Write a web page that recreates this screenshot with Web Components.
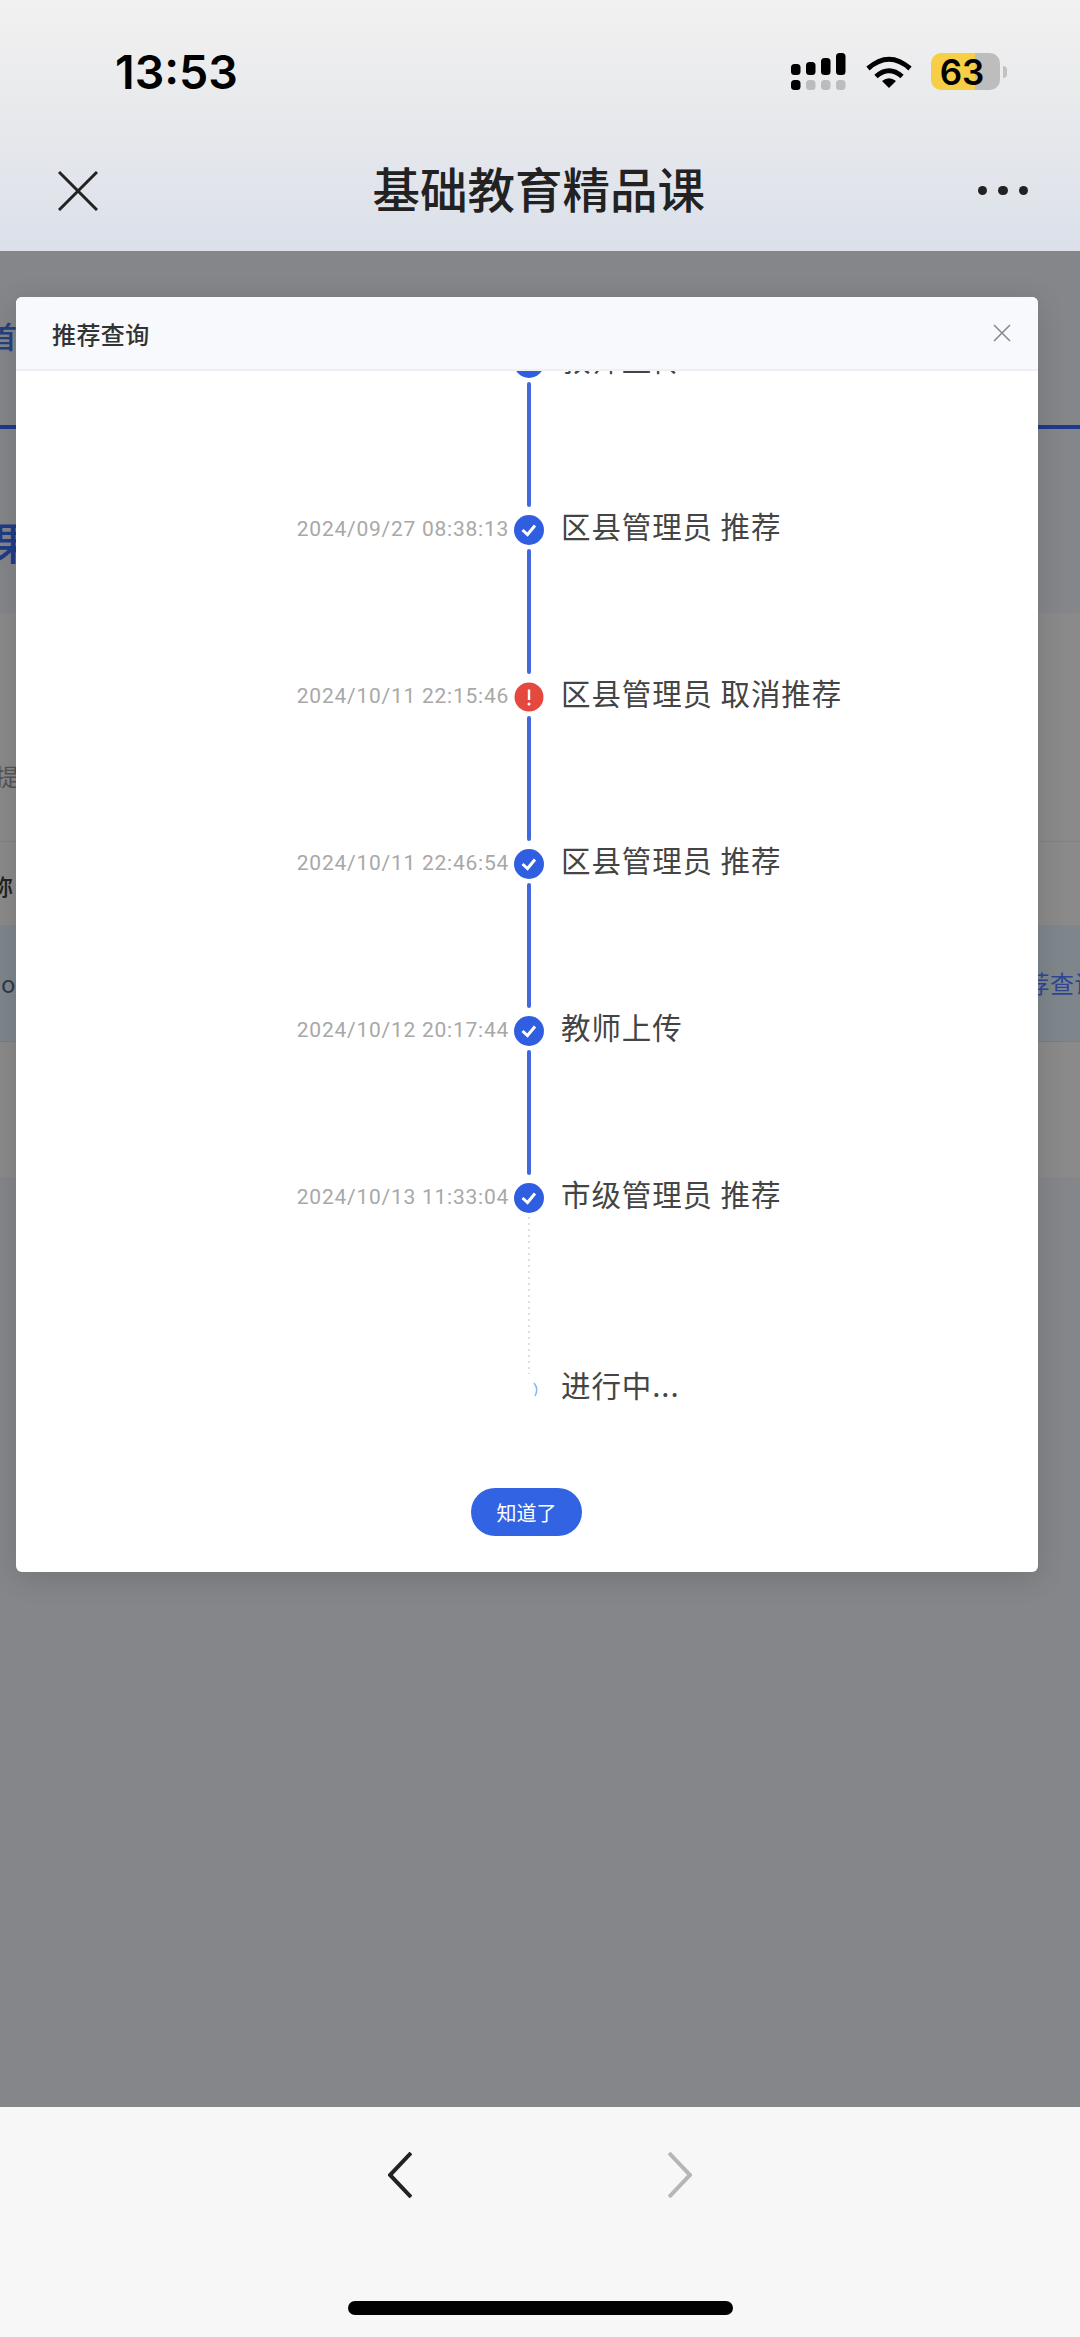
<!DOCTYPE html>
<html lang="zh">
<head>
<meta charset="utf-8">
<title>基础教育精品课</title>
<style>
    html, body {margin: 0; padding: 0; background: #85868a;}
    body {font-family: "Noto Sans CJK SC", "Noto Sans", sans-serif;}
</style>
</head>
<body>
<x-app>
    <x-status-bar slot="top" time="13:53" battery="63"></x-status-bar>
    <x-nav-bar slot="top">基础教育精品课</x-nav-bar>
    <x-backdrop slot="main"></x-backdrop>
    <x-browser-bar slot="bottom"></x-browser-bar>
    <x-modal slot="over" heading="推荐查询">
        <x-step time="2024/09/27 08:26:31" status="done">教师上传</x-step>
        <x-step time="2024/09/27 08:38:13" status="done">区县管理员 推荐</x-step>
        <x-step time="2024/10/11 22:15:46" status="error">区县管理员 取消推荐</x-step>
        <x-step time="2024/10/11 22:46:54" status="done">区县管理员 推荐</x-step>
        <x-step time="2024/10/12 20:17:44" status="done">教师上传</x-step>
        <x-step time="2024/10/13 11:33:04" status="done" next="pending">市级管理员 推荐</x-step>
        <x-step status="pending">进行中...</x-step>
        <x-button slot="footer">知道了</x-button>
    </x-modal>
</x-app>

<script>
"use strict";

const CJK = `"Noto Sans CJK SC", "Noto Sans", sans-serif`;

class App extends HTMLElement {
    constructor() {
        super();
        this.attachShadow({mode: "open"}).innerHTML = `
            <style>
                :host {display: flex; flex-direction: column; position: relative; width: 1080px; height: 2337px; overflow: hidden;}
                .top {background: linear-gradient(#f1f1f1, #e9eaec 40%, #dbe0ea);}
                .main {flex: 1; display: flex; min-height: 0;}
            </style>
            <div class="top"><slot name="top"></slot></div>
            <div class="main"><slot name="main"></slot></div>
            <slot name="bottom"></slot>
            <slot name="over"></slot>
        `;
    }
}

class StatusBar extends HTMLElement {
    connectedCallback() {
        const root = this.attachShadow({mode: "open"});
        const upper = [[0, 11, 11], [15, 13, 9], [30, 17, 5], [45, 22, 0]];
        const bars = upper.map(b => `<rect x="${b[0]}" y="${b[2]}" width="9.5" height="${b[1]}" rx="3.5"/>`).join("");
        const dots = [0, 15, 30, 45].map((x, i) =>
            `<rect x="${x}" y="27" width="9.5" height="10" rx="3.5" fill="${i ? "#bcbcbc" : "#000"}"/>`).join("");
        root.innerHTML = `
            <style>
                :host {display: flex; align-items: center; height: 142px; padding: 0 73px 0 115px; box-sizing: border-box; color: #000;}
                .time {font: 600 46.5px Inter, "Liberation Sans", sans-serif; flex: 1; margin-top: 2px;}
                .icons {display: flex; align-items: center; margin-top: 1px;}
                .signal {margin-right: 20px;}
                .wifi {margin-right: 19px;}
                .battery {width: 69px; height: 37px; border-radius: 10px; display: flex; align-items: center; justify-content: center;
                    background: linear-gradient(90deg, #f6cf47 0 44px, #bdbdbd 44px);
                    font: 600 35px Inter, "Liberation Sans", sans-serif; letter-spacing: 0; padding-right: 7px; box-sizing: border-box;}
                .nub {width: 4px; height: 12px; margin-left: 3px; border-radius: 0 6px 6px 0; background: #c2c2c2;}
            </style>
            <div class="time">${this.getAttribute("time")}</div>
            <div class="icons">
                <svg class="signal" width="55" height="37" viewBox="0 0 55 37">${bars}${dots}</svg>
                <svg class="wifi" width="46" height="33" viewBox="0 0 46 33" fill="none" stroke="#000">
                    <path d="M2 13.5Q23 -5 44 13.5" stroke-width="5"/>
                    <path d="M10 21.5Q23 10 36 21.5" stroke-width="5"/>
                    <path d="M16 26Q23 20.5 30 26L23 33Z" fill="#000" stroke="none"/>
                </svg>
                <div class="battery">${this.getAttribute("battery")}</div>
                <div class="nub"></div>
            </div>
        `;
    }
}

class NavBar extends HTMLElement {
    constructor() {
        super();
        this.attachShadow({mode: "open"}).innerHTML = `
            <style>
                :host {display: flex; align-items: center; justify-content: space-between; height: 109px; padding: 0 52px 18px 58px; box-sizing: border-box;}
                .title {font: 500 47.5px ${CJK}; color: #222; line-height: 1; margin-left: 2px;}
                .more {display: flex; gap: 11px; margin-top: 6px;}
                .more i {width: 9.5px; height: 9.5px; border-radius: 50%; background: #222;}
                svg {margin-top: 6px;}
            </style>
            <svg width="40" height="40" viewBox="0 0 40 40" stroke="#222" stroke-width="3" fill="none"><path d="M1 1L39 39M39 1L1 39"/></svg>
            <div class="title"><slot></slot></div>
            <div class="more"><i></i><i></i><i></i></div>
        `;
    }
}

// the page behind the dialog, only its edges show
class Backdrop extends HTMLElement {
    constructor() {
        super();
        this.attachShadow({mode: "open"}).innerHTML = `
            <style>
                :host {display: flex; flex-direction: column; flex: 1; min-width: 0; overflow: hidden; font-family: ${CJK}; white-space: nowrap;}
                .tabs {padding-top: 69px; height: 105px; border-bottom: 4px solid #1e3a8c; font-size: 30px; line-height: 30px; color: #24407f; font-weight: 500;}
                .head {padding-top: 90px; height: 94px; font-size: 44px; line-height: 44px; color: #1f3c86; font-weight: 500;}
                .tip {padding-top: 149px; height: 79px; background: #8a8a8a; border-bottom: 1px solid #828282; font-size: 24px; line-height: 28px; color: #555;}
                .th {padding-top: 30px; height: 53px; background: #8a8a8b; font-size: 23px; line-height: 28px; color: #222; font-weight: 500;}
                .row {height: 117px; display: flex; align-items: center; justify-content: space-between; background: #7e868c; border-bottom: 1px solid #787f85; box-sizing: border-box; color: #2d3a45; padding-bottom: 2px;}
                .op {font-size: 24px; margin-left: 1px;}
                .query {font-size: 24px; letter-spacing: .5px; color: #2f4694; margin-right: -19px;}
                .rest {height: 135px; background: #8a8a8a;}
                .tabs span {margin-left: -13px;}
                .head span {margin-left: -9px;}
                .tip span {margin-left: -5px;}
                .th span {margin-left: -10px;}
                span {display: inline-block;}
            </style>
            <div class="tabs"><span>首</span></div>
            <div class="head"><span>果</span></div>
            <div class="tip"><span>提</span></div>
            <div class="th"><span>称</span></div>
            <div class="row"><div class="op">op</div><div class="query">推荐查询</div></div>
            <div class="rest"></div>
        `;
    }
}

class Modal extends HTMLElement {
    connectedCallback() {
        const root = this.attachShadow({mode: "open"});
        root.innerHTML = `
            <style>
                :host {display: flex; flex-direction: column; position: absolute; left: 16px; top: 297px; width: 1022px; height: 1275px; background: #fff; border-radius: 6px; box-shadow: 0 6px 30px rgba(0,0,0,.14); overflow: hidden;}
                header {display: flex; align-items: center; justify-content: space-between; height: 72px; padding: 0 27px 0 36px; background: #f7f9fd; border-bottom: 2px solid #eeeff2;}
                h2 {margin: 0; font: 500 24px ${CJK}; color: #333; letter-spacing: .4px;}
                .body {flex: 1; min-height: 0; overflow: hidden;}
                .list {margin-top: -23px;}
                footer {display: flex; justify-content: center; padding-bottom: 36px; padding-right: 1px;}
            </style>
            <header>
                <h2>${this.getAttribute("heading")}</h2>
                <svg width="18" height="18" viewBox="0 0 18 18" stroke="#8a8a8a" stroke-width="1.6" fill="none"><path d="M1 1L17 17M17 1L1 17"/></svg>
            </header>
            <div class="body"><div class="list"><slot></slot></div></div>
            <footer><slot name="footer"></slot></footer>
        `;
    }
}

const stepTemplate = document.createElement("template");
stepTemplate.innerHTML = `
    <style>
        :host {display: flex; height: 167px;}
        :host([next="pending"]) {height: 191px;}
        :host([status="pending"]) {height: 60px;}
        .time {width: 493px; margin-right: 5px; text-align: right; font: 21px/30px Roboto, "Liberation Sans", sans-serif; letter-spacing: .75px; color: #a8a8a8; white-space: nowrap; margin-top: -1px;}
        .rail {width: 30px; display: flex; flex-direction: column; align-items: center; margin-right: 17px;}
        .rail svg {flex: none; display: block;}
        .line {flex: 1; width: 4px; margin: 4px 0 8px; border-radius: 2px; background: #4169dc;}
        .line.pending {width: 2px; margin: 4px 0 0; border-radius: 0; background: repeating-linear-gradient(#dedede 0 2px, transparent 2px 6px);}
        .label {font: 29.5px/30px ${CJK}; letter-spacing: .9px; color: #444; white-space: nowrap; margin-top: -5px;}
    </style>
    <div class="time"></div>
    <div class="rail"></div>
    <div class="label"><slot></slot></div>
`;

const stepIcons = {
    done: `<svg width="30" height="30" viewBox="0 0 30 30"><circle cx="15" cy="15" r="15" fill="#2f5fe0"/><path d="M8.5 15L13.5 19.5L21 10.5" fill="none" stroke="#fff" stroke-width="3"/></svg>`,
    error: `<svg width="30" height="30" viewBox="0 0 30 30"><circle cx="15" cy="15" r="14.5" fill="#e5483f"/><path d="M15 7.5V18" stroke="#fff" stroke-width="2.4"/><circle cx="15" cy="22" r="1.5" fill="#fff"/></svg>`,
    pending: `<svg width="30" height="30" viewBox="0 0 30 30"><path d="M20 9Q25 15 21 22" fill="none" stroke="#8ab8ee" stroke-width="1.5"/></svg>`
};

class Step extends HTMLElement {
    constructor() {
        super();
        this._shadowRoot = this.attachShadow({mode: "open"});
        this._shadowRoot.appendChild(stepTemplate.content.cloneNode(true));
    }

    connectedCallback() {
        const status = this.getAttribute("status");
        const next = this.getAttribute("next");
        this._shadowRoot.querySelector(".time").textContent = this.getAttribute("time") || "";
        let rail = stepIcons[status];
        if (status !== "pending") {
            rail += `<div class="line ${next === "pending" ? "pending" : ""}"></div>`;
        }
        this._shadowRoot.querySelector(".rail").innerHTML = rail;
    }
}

class Button extends HTMLElement {
    constructor() {
        super();
        this.attachShadow({mode: "open"}).innerHTML = `
            <style>
                :host {display: flex; align-items: center; justify-content: center; width: 111px; height: 48px; border-radius: 24px; background: #3163e3; color: #fff; font: 20px ${CJK};}
            </style>
            <slot></slot>
        `;
    }
}

class BrowserBar extends HTMLElement {
    constructor() {
        super();
        this.attachShadow({mode: "open"}).innerHTML = `
            <style>
                :host {display: flex; flex-direction: column; align-items: center; height: 230px; background: #f7f7f7; box-sizing: border-box; padding-top: 45px;}
                .arrows {display: flex; gap: 256px;}
                svg {display: block;}
                .home {width: 385px; height: 14px; border-radius: 7px; background: #000; margin-top: auto; margin-bottom: 22px;}
            </style>
            <div class="arrows">
                <svg width="24" height="46" viewBox="0 0 24 46" fill="none" stroke="#222" stroke-width="4"><path d="M23 1L2 23L23 45"/></svg>
                <svg width="24" height="46" viewBox="0 0 24 46" fill="none" stroke="#b6b6b6" stroke-width="4"><path d="M1 1L22 23L1 45"/></svg>
            </div>
            <div class="home"></div>
        `;
    }
}

customElements.define("x-app", App);
customElements.define("x-status-bar", StatusBar);
customElements.define("x-nav-bar", NavBar);
customElements.define("x-backdrop", Backdrop);
customElements.define("x-modal", Modal);
customElements.define("x-step", Step);
customElements.define("x-button", Button);
customElements.define("x-browser-bar", BrowserBar);
</script>
</body>
</html>
